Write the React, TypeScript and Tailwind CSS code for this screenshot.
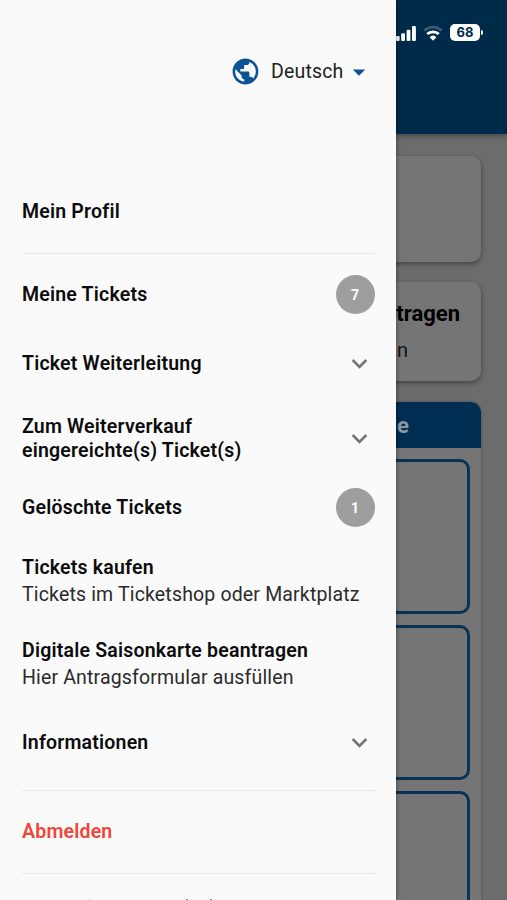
import type { ReactNode } from "react";
import { MdArrowDropDown, MdKeyboardArrowDown, MdPublic } from "react-icons/md";

function Row({ height, children }: { height: string; children: ReactNode }) {
  return <div className={`flex shrink-0 items-center justify-between ${height}`}>{children}</div>;
}

function Title({ children }: { children: ReactNode }) {
  return <span className="text-[19.5px] leading-[23.5px] font-semibold tracking-[0.2px] whitespace-nowrap">{children}</span>;
}

function Badge({ count }: { count: number }) {
  return (
    <span className="flex size-[39px] items-center justify-center rounded-full bg-[#9e9e9e] text-sm font-bold text-white">
      {count}
    </span>
  );
}

function Chevron() {
  return <MdKeyboardArrowDown className="size-[31px] text-[#757575]" />;
}

function LinkBlock({ title, text, height }: { title: string; text: string; height: string }) {
  return (
    <div className={`flex shrink-0 flex-col justify-center pt-px ${height}`}>
      <div className="h-[26px] leading-[26px]">
        <Title>{title}</Title>
      </div>
      <span className="text-[19.5px] leading-[26px] tracking-[0.16px] whitespace-nowrap text-[#2b2b2b]">{text}</span>
    </div>
  );
}

function StatusBar() {
  return (
    <div className="flex items-center justify-end pt-6 pr-6">
      <svg width="20" height="16" viewBox="0 0 20 16" fill="#fff">
        <rect x="0" y="11" width="3.6" height="5" rx="1" />
        <rect x="5.2" y="8.2" width="3.8" height="7.8" rx="1" />
        <rect x="10.6" y="4.8" width="3.8" height="11.2" rx="1" />
        <rect x="16" y="1" width="3.9" height="15" rx="1" />
      </svg>
      <svg className="ml-[7px]" width="20" height="16" viewBox="0 0 20 16" fill="none" strokeWidth="2.8">
        <path d="M1.3 5.6a12.6 12.6 0 0 1 17.4 0" stroke="#35597a" />
        <path d="M4.2 9.1a8.5 8.5 0 0 1 11.6 0" stroke="#fff" />
        <path d="M10 15.8 6.6 12.2a5 5 0 0 1 6.8 0Z" fill="#fff" />
      </svg>
      <span className="ml-[7px] flex h-[17px] w-[30px] items-center justify-center rounded-[5px] bg-white font-['Inter',sans-serif] text-[13px] font-bold text-[#002a4a]">
        68
      </span>
      <span className="ml-px h-[5px] w-[2px] rounded-r-full bg-white" />
    </div>
  );
}

function Page() {
  return (
    <div className="flex h-full flex-col bg-[#6c6c6c]">
      <header className="z-10 h-[134px] shrink-0 bg-[#002a4a] shadow-[0_2px_6px_rgba(0,0,0,0.35)]">
        <StatusBar />
      </header>
      <main className="flex flex-col px-[26px] pt-[22px]">
        <section className="h-[106px] shrink-0 rounded-[10px] bg-[#757575] shadow-[0_2px_5px_rgba(0,0,0,0.4)]" />
        <section className="mt-5 flex h-[99px] shrink-0 flex-col items-end rounded-[10px] bg-[#757575] pt-[18px] shadow-[0_2px_5px_rgba(0,0,0,0.4)]">
          <span className="pr-[21px] text-[22px] leading-7 font-bold text-black">tragen</span>
          <span className="mt-2 pr-[73px] text-xl leading-7 text-[#141414]">n</span>
        </section>
        <section className="mt-[21px] shrink-0 rounded-t-[10px] bg-[#757575] shadow-[0_0_3px_rgba(0,0,0,0.3)]">
          <div className="flex h-[46px] items-center justify-end rounded-t-[10px] bg-[#002d52] pr-[72px] text-[22px] font-bold text-[#8a98a4]">
            e
          </div>
          <div className="flex flex-col gap-[11px] px-[11px] pt-[11px]">
            <div className="h-[155px] rounded-[10px] border-3 border-[#0b3252]" />
            <div className="h-[155px] rounded-[10px] border-3 border-[#0b3252]" />
            <div className="h-[155px] rounded-[10px] border-3 border-[#0b3252]" />
          </div>
        </section>
      </main>
    </div>
  );
}

export default function App() {
  return (
    <div className="relative h-[900px] w-[507px] overflow-hidden font-['Roboto',sans-serif]">
      <Page />
      <nav className="absolute inset-y-0 left-0 z-20 flex w-[395.5px] flex-col overflow-hidden bg-[#fafafa] pr-[21px] pl-[22px] text-[#0c0c0c] shadow-[0_0_5px_rgba(0,0,0,0.45)]">
        <div className="flex h-[143px] shrink-0 items-center justify-end pr-px">
          <MdPublic className="size-[31px] text-[#0a5496]" />
          <span className="mt-px ml-[10px] text-[19.5px] tracking-[0.16px] text-[#222]">Deutsch</span>
          <MdArrowDropDown className="size-[30px] text-[#0a5496]" />
        </div>
        <div className="h-[27px] shrink-0" />
        <Row height="h-[83px]">
          <Title>Mein Profil</Title>
        </Row>
        <hr className="shrink-0 border-[#e8e8e8]" />
        <Row height="h-[81px]">
          <Title>Meine Tickets</Title>
          <Badge count={7} />
        </Row>
        <Row height="h-[57px]">
          <Title>Ticket Weiterleitung</Title>
          <Chevron />
        </Row>
        <Row height="h-[93px]">
          <Title>
            Zum Weiterverkauf
            <br />
            eingereichte(s) Ticket(s)
          </Title>
          <Chevron />
        </Row>
        <Row height="h-[45px]">
          <Title>Gelöschte Tickets</Title>
          <Badge count={1} />
        </Row>
        <LinkBlock height="h-[102px]" title="Tickets kaufen" text="Tickets im Ticketshop oder Marktplatz" />
        <LinkBlock height="h-[64px]" title="Digitale Saisonkarte beantragen" text="Hier Antragsformular ausfüllen" />
        <Row height="h-[93px]">
          <Title>Informationen</Title>
          <Chevron />
        </Row>
        <hr className="mt-px shrink-0 border-[#e8e8e8]" />
        <Row height="h-[82px]">
          <span className="text-[#ef4538]">
            <Title>Abmelden</Title>
          </span>
        </Row>
        <hr className="shrink-0 border-[#e8e8e8]" />
        <div className="mt-[25px] flex h-px shrink-0">
          <span className="ml-[67px] w-[2px] bg-[#d5d5d5]" />
          <span className="ml-[95px] w-[2px] bg-[#8a8a8a]" />
          <span className="ml-[22px] w-[2px] bg-[#8a8a8a]" />
        </div>
      </nav>
    </div>
  );
}
